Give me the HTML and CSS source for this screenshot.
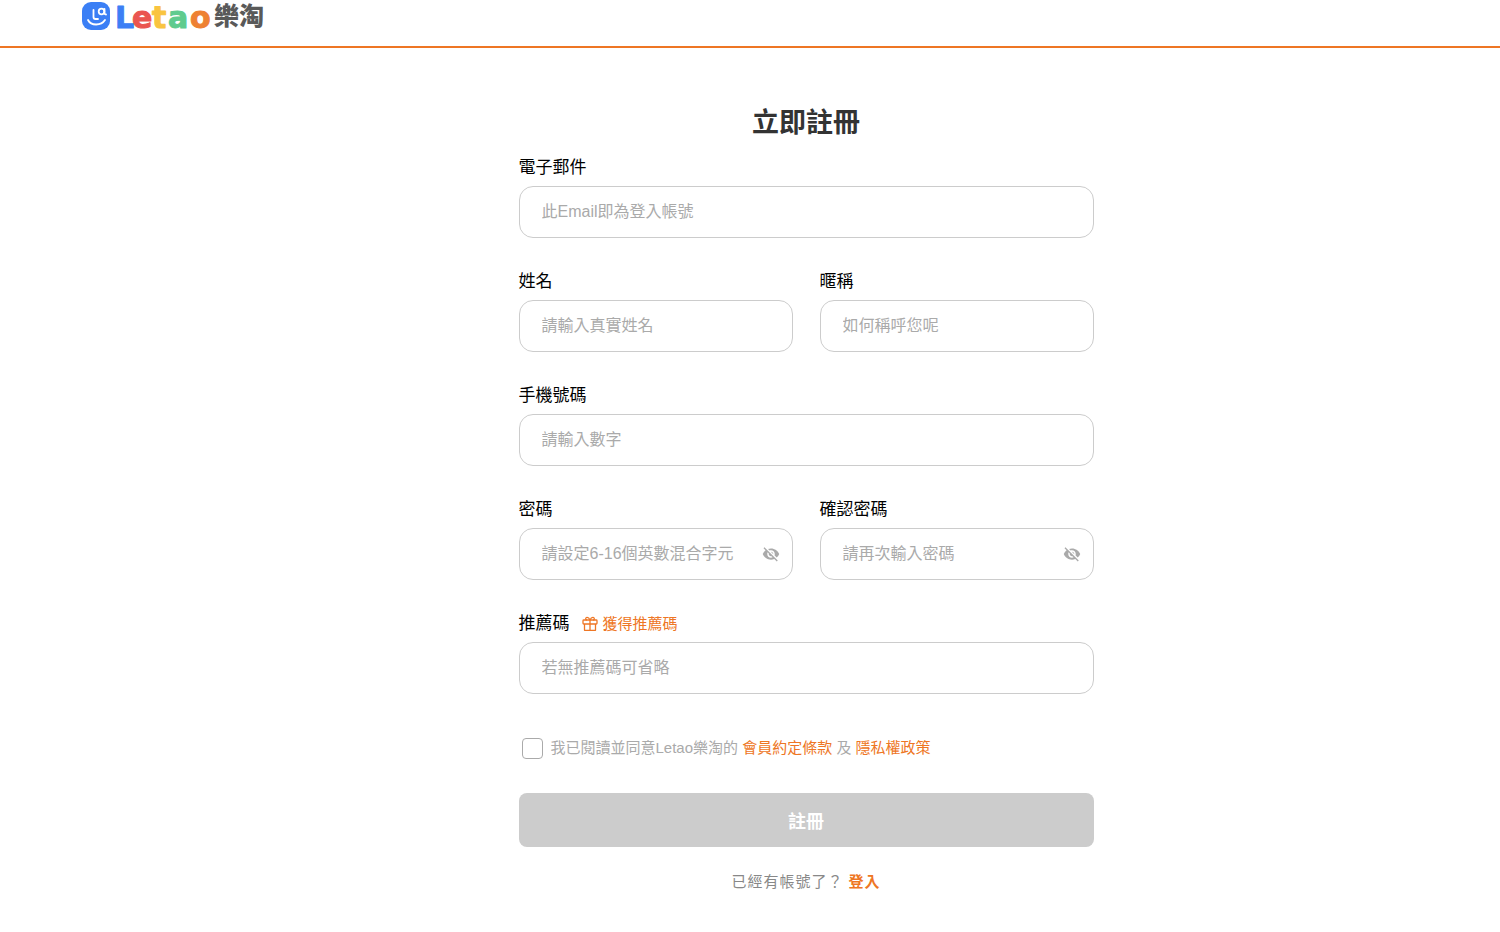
FILE: index.html
```html
<!DOCTYPE html>
<html lang="zh-Hant">
  <head>
    <meta charset="UTF-8" />
    <meta name="viewport" content="width=device-width, initial-scale=1.0" />
    <title>Letao樂淘 - 立即註冊</title>
    <link rel="stylesheet" href="styles.css">
  </head>
  <body>
    <header class="header">
      <a class="logo" href="#" aria-label="Letao樂淘">
        <svg width="190" height="44" viewBox="0 0 190 44">
          <rect x="1" y="2" width="28" height="28" rx="9" fill="#3b7ff5" />
          <g fill="none" stroke="#fff" stroke-width="1.8" stroke-linecap="round" stroke-linejoin="round">
            <path d="M12.500 10v7q0 2 2 2h2.500" />
            <circle cx="20.500" cy="11.500" r="2.800" />
            <path d="M23.500 9v4q0 1.500 1.500 1.500" />
            <path d="M7 20c3 6 13 6 17 0" />
          </g>
          <g class="logo-latin">
            <text x="34" y="28" fill="#3b7ff5" stroke="#3b7ff5">L</text>
            <text x="51" y="28" fill="#ea5550" stroke="#ea5550">e</text>
            <text x="71" y="28" fill="#f9c440" stroke="#f9c440">t</text>
            <text x="87" y="28" fill="#5fcb8e" stroke="#5fcb8e">a</text>
            <text x="109" y="28" fill="#ee8133" stroke="#ee8133">o</text>
          </g>
          <text x="133" y="25" class="logo-han" fill="#595959">樂淘</text>
        </svg>
      </a>
    </header>

    <main class="main">
      <form class="form">
        <h1>立即註冊</h1>

        <div class="field">
          <div class="field-head"><label for="email">電子郵件</label></div>
          <input class="text-input" type="email" id="email" placeholder="此Email即為登入帳號" />
        </div>

        <div class="row">
          <div class="field">
            <div class="field-head"><label for="name">姓名</label></div>
            <input class="text-input" type="text" id="name" placeholder="請輸入真實姓名" />
          </div>
          <div class="field">
            <div class="field-head"><label for="nickname">暱稱</label></div>
            <input class="text-input" type="text" id="nickname" placeholder="如何稱呼您呢" />
          </div>
        </div>

        <div class="field">
          <div class="field-head"><label for="phone">手機號碼</label></div>
          <input class="text-input" type="tel" id="phone" placeholder="請輸入數字" />
        </div>

        <div class="row">
          <div class="field">
            <div class="field-head"><label for="password">密碼</label></div>
            <div class="password">
              <input class="text-input" type="password" id="password" placeholder="請設定6-16個英數混合字元" />
              <button type="button" class="eye" aria-label="顯示密碼">
                <svg width="18" height="18" viewBox="0 0 24 24" fill="#aaa">
                  <path d="M12 7c2.76 0 5 2.24 5 5 0 .65-.13 1.26-.36 1.83l2.92 2.92c1.51-1.26 2.7-2.89 3.43-4.75-1.73-4.39-6-7.5-11-7.5-1.4 0-2.74.25-3.98.7l2.16 2.16C10.74 7.13 11.35 7 12 7zM2 4.27l2.74 2.74C3.08 8.3 1.78 10.02 1 12c1.73 4.39 6 7.5 11 7.5 1.55 0 3.03-.3 4.38-.84L19.73 22 21 20.73 3.27 3 2 4.27zM7.53 9.8l1.55 1.55c-.05.21-.08.43-.08.65 0 1.66 1.34 3 3 3 .22 0 .44-.03.65-.08l1.55 1.55c-.67.33-1.41.53-2.2.53-2.76 0-5-2.24-5-5 0-.79.2-1.53.53-2.2zm4.31-.78l3.15 3.15.02-.16c0-1.66-1.34-3-3-3l-.17.01z" />
                </svg>
              </button>
            </div>
          </div>
          <div class="field">
            <div class="field-head"><label for="password2">確認密碼</label></div>
            <div class="password">
              <input class="text-input" type="password" id="password2" placeholder="請再次輸入密碼" />
              <button type="button" class="eye" aria-label="顯示密碼">
                <svg width="18" height="18" viewBox="0 0 24 24" fill="#aaa">
                  <path d="M12 7c2.76 0 5 2.24 5 5 0 .65-.13 1.26-.36 1.83l2.92 2.92c1.51-1.26 2.7-2.89 3.43-4.75-1.73-4.39-6-7.5-11-7.5-1.4 0-2.74.25-3.98.7l2.16 2.16C10.74 7.13 11.35 7 12 7zM2 4.27l2.74 2.74C3.08 8.3 1.78 10.02 1 12c1.73 4.39 6 7.5 11 7.5 1.55 0 3.03-.3 4.38-.84L19.73 22 21 20.73 3.27 3 2 4.27zM7.53 9.8l1.55 1.55c-.05.21-.08.43-.08.65 0 1.66 1.34 3 3 3 .22 0 .44-.03.65-.08l1.55 1.55c-.67.33-1.41.53-2.2.53-2.76 0-5-2.24-5-5 0-.79.2-1.53.53-2.2zm4.31-.78l3.15 3.15.02-.16c0-1.66-1.34-3-3-3l-.17.01z" />
                </svg>
              </button>
            </div>
          </div>
        </div>

        <div class="field">
          <div class="field-head">
            <label for="referral">推薦碼</label>
            <a class="gift-link" href="#">
              <svg width="16" height="16" viewBox="0 0 16 16" fill="none" stroke="currentColor" stroke-width="1.3" stroke-linejoin="round">
                <rect x="1" y="4" width="14" height="4" rx="0.8" />
                <path d="M2.5 8v6.3h11V8M8 4v10.3M8 4C7 1.6 5.8 1.2 4.9 1.3 3.3 1.5 3.2 4 5 4M8 4c1-2.4 2.2-2.8 3.1-2.7C12.7 1.5 12.8 4 11 4" />
              </svg>
              獲得推薦碼
            </a>
          </div>
          <input class="text-input" type="text" id="referral" placeholder="若無推薦碼可省略" />
        </div>

        <div class="agree">
          <input type="checkbox" id="agree" />
          <label for="agree">我已閱讀並同意Letao樂淘的 <a href="#">會員約定條款</a> 及 <a href="#">隱私權政策</a></label>
        </div>

        <button type="submit" class="submit" disabled>註冊</button>

        <p class="login">已經有帳號了？ <a href="#">登入</a></p>
      </form>
    </main>
  </body>
</html>
```
FILE: styles.css
```css
* {
  margin: 0;
  padding: 0;
  box-sizing: border-box;
}

body {
  font-family: "Liberation Sans", "Noto Sans CJK TC", sans-serif;
  background-color: #fff;
  color: #000;
}

a {
  color: #ee7624;
  text-decoration: none;
}

.header {
  height: 48px;
  padding-left: 81px;
  border-bottom: 2px solid #ee7624;
}

.logo {
  display: inline-block;
}

.logo svg {
  display: block;
}

.logo-latin {
  font-family: "DejaVu Sans", sans-serif;
  font-size: 30px;
  font-weight: bold;
  stroke-width: 1px;
  stroke-linejoin: round;
}

.logo-han {
  font-size: 25px;
  font-weight: 900;
}

.main {
  display: flex;
  justify-content: center;
  padding: 55px 0 32px 112px;
}

.form {
  width: 100%;
  max-width: 575px;
}

h1 {
  margin-bottom: 11px;
  font-size: 27px;
  line-height: 40px;
  text-align: center;
  color: #333;
}

.row {
  display: grid;
  grid-template-columns: 1fr 1fr;
  column-gap: 27px;
}

.field {
  margin-bottom: 30px;
}

.field-head {
  display: flex;
  align-items: center;
  gap: 12px;
  height: 28px;
  margin-bottom: 4px;
  font-size: 17px;
  line-height: 24px;
}

.gift-link {
  display: flex;
  align-items: center;
  gap: 5px;
  font-size: 15px;
}

.text-input {
  display: block;
  width: 100%;
  height: 52px;
  padding: 0 22px;
  border: 1px solid #ccc;
  border-radius: 14px;
  font-family: inherit;
  font-size: 16px;
  outline: none;
}

.text-input::placeholder {
  color: #aaa;
}

.password {
  position: relative;
}

.password .text-input {
  padding-right: 40px;
}

.eye {
  position: absolute;
  top: 17px;
  right: 13px;
  width: 18px;
  height: 18px;
  border: none;
  background: none;
  cursor: pointer;
}

.eye svg {
  display: block;
}

.agree {
  display: flex;
  align-items: center;
  gap: 8px;
  margin: 42px 0 33px 3px;
  font-size: 15px;
  line-height: 24px;
  color: #aaa;
}

.agree input {
  appearance: none;
  width: 21px;
  height: 21px;
  border: 1px solid #aaa;
  border-radius: 4px;
}

.agree input:checked {
  background-color: #ee7624;
}

.submit {
  display: block;
  width: 100%;
  height: 54px;
  border: none;
  border-radius: 8px;
  background-color: #ccc;
  color: #fff;
  font-family: inherit;
  font-size: 18px;
  font-weight: bold;
}

.login {
  margin-top: 24px;
  font-size: 15px;
  line-height: 22px;
  letter-spacing: 1px;
  text-align: center;
  color: #888;
}

.login a {
  font-weight: bold;
}
```
